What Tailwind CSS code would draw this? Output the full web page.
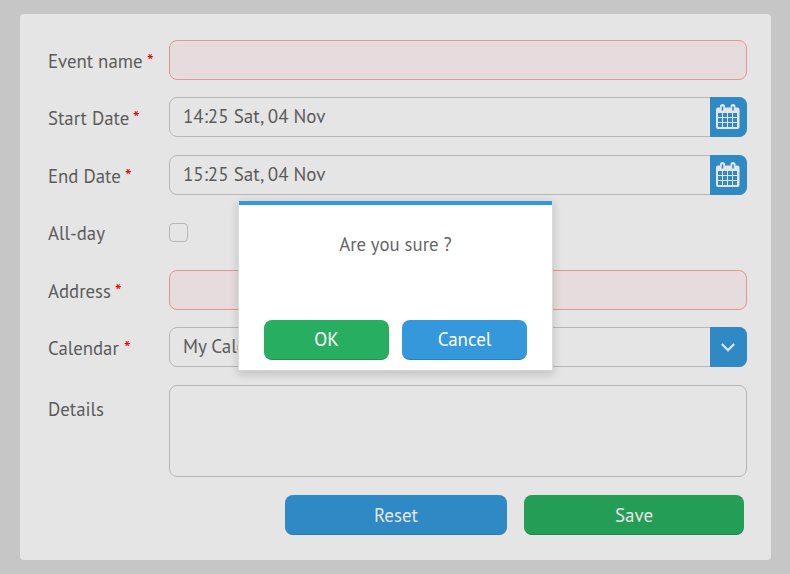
<!DOCTYPE html>
<html lang="en">
<head>
<meta charset="utf-8">
<title>New event</title>
<script src="https://cdn.jsdelivr.net/npm/@tailwindcss/browser@4"></script>
</head>
<body class="h-[574px] overflow-hidden bg-[#c6c6c6] pl-5 pt-3.5 font-['PT_Sans','Noto_Sans',sans-serif] text-[18.8px] leading-10 text-[#5b5b5b]">
<svg class="hidden">
  <symbol id="calendar" viewBox="0 0 24 26">
    <path fill="#e5e5e5" fill-rule="evenodd" d="M2 3.500H4V2.500Q4 0 6.500 0T9 2.500V3.500H14.500V2.500Q14.500 0 17 0T19.500 2.500V3.500H21.500Q23.500 3.500 23.500 5.500V23Q23.500 25 21.500 25H2Q0 25 0 23V5.500Q0 3.500 2 3.500ZM2 9V13H6V9ZM7 9V13H11V9ZM12 9V13H16V9ZM17 9V13H21V9ZM2 14V18H6V14ZM7 14V18H11V14ZM12 14V18H16V14ZM17 14V18H21V14ZM2 19V23H6V19ZM7 19V23H11V19ZM12 19V23H16V19ZM17 19V23H21V19ZM5.700 2.500V6.500H7.300V2.500ZM16.200 2.500V6.500H17.800V2.500Z"/>
  </symbol>
</svg>
<main class="h-[546px] w-[751px] rounded-[4px] bg-[#e5e5e5] pl-7 pt-[26px]">
  <div class="mb-[17px] flex h-10">
    <label class="flex w-[121px] pt-px"><span class="w-[99px] whitespace-nowrap">Event name</span><span class="text-[#e60000]">*</span></label>
    <div class="h-10 w-[578px] rounded-lg border border-[#e69494] bg-[#e6dcdd]"></div>
  </div>
  <div class="mb-[18px] flex h-10">
    <label class="flex w-[121px] pt-px"><span class="w-[85px] whitespace-nowrap">Start Date</span><span class="text-[#e60000]">*</span></label>
    <div class="flex h-10 w-[578px] justify-between rounded-lg border border-[#b7b7b7] pl-[13px]">
      <span class="text-[19px] leading-[36px]">14:25 Sat, 04 Nov</span>
      <button class="-m-px flex h-10 w-[37px] justify-center rounded-r-lg bg-[#2f89c5] pr-[1px] pt-[7px]"><svg class="h-[26px] w-6"><use href="#calendar"/></svg></button>
    </div>
  </div>
  <div class="mb-[17px] flex h-10">
    <label class="flex w-[121px] pt-px"><span class="w-[77px] whitespace-nowrap">End Date</span><span class="text-[#e60000]">*</span></label>
    <div class="flex h-10 w-[578px] justify-between rounded-lg border border-[#b7b7b7] pl-[13px]">
      <span class="text-[19px] leading-[36px]">15:25 Sat, 04 Nov</span>
      <button class="-m-px flex h-10 w-[37px] justify-center rounded-r-lg bg-[#2f89c5] pr-[1px] pt-[7px]"><svg class="h-[26px] w-6"><use href="#calendar"/></svg></button>
    </div>
  </div>
  <div class="mb-[18px] flex h-10">
    <label class="w-[121px] pt-px">All-day</label>
    <div class="mt-[11px] size-[19px] rounded-[4px] border border-[#b7b7b7]"></div>
  </div>
  <div class="mb-[17px] flex h-10">
    <label class="flex w-[121px] pt-px"><span class="w-[67px] whitespace-nowrap">Address</span><span class="text-[#e60000]">*</span></label>
    <div class="h-10 w-[578px] rounded-lg border border-[#e69494] bg-[#e6dcdd]"></div>
  </div>
  <div class="mb-[18px] flex h-10">
    <label class="flex w-[121px] pt-px"><span class="w-[76px] whitespace-nowrap">Calendar</span><span class="text-[#e60000]">*</span></label>
    <div class="flex h-10 w-[578px] justify-between rounded-lg border border-[#b7b7b7] pl-[13px]">
      <span class="text-[19px] leading-[36px]">My Calendar</span>
      <button class="-m-px flex h-10 w-[37px] items-center justify-center rounded-r-lg bg-[#2f89c5] pr-px"><svg class="h-[9px] w-[14px]" viewBox="0 0 14 9" fill="none" stroke="#e5e5e5" stroke-width="2.200"><path d="M.8 1 7 7.200 13.200 1"/></svg></button>
    </div>
  </div>
  <div class="mb-[18px] flex h-[92px]">
    <label class="w-[121px] pt-1">Details</label>
    <div class="w-[578px] rounded-lg border border-[#b7b7b7]"></div>
  </div>
  <div class="flex gap-[17px] pl-[237px] text-[19px] text-[#e5e5e5]">
    <button class="h-10 w-[222px] rounded-lg border-b border-[#277cb5] bg-[#2f89c5]">Reset</button>
    <button class="h-10 w-[220px] rounded-lg border-b border-[#1f8549] bg-[#249d56]">Save</button>
  </div>
</main>
<div class="absolute left-[239px] top-[201px] h-[169px] w-[313px] border-t-4 border-[#3498db] bg-white pt-[19px] text-center shadow-[0_1px_0_#d4d4d4,1px_0_0_#dadada,-1px_0_0_#dedede,1px_1px_0_#d4d4d4,0_3px_8px_2px_rgba(0,0,0,.14)]">
  <p class="h-24 text-[#666]">Are you sure ?</p>
  <div class="flex gap-[13px] pl-[25px] text-[19px] text-white">
    <button class="h-10 w-[125px] rounded-lg border-b border-[#219251] bg-[#28ae60] pb-px leading-[38px]">OK</button>
    <button class="h-10 w-[125px] rounded-lg border-b border-[#2383c4] bg-[#3498db] pb-px leading-[38px]">Cancel</button>
  </div>
</div>
</body>
</html>
